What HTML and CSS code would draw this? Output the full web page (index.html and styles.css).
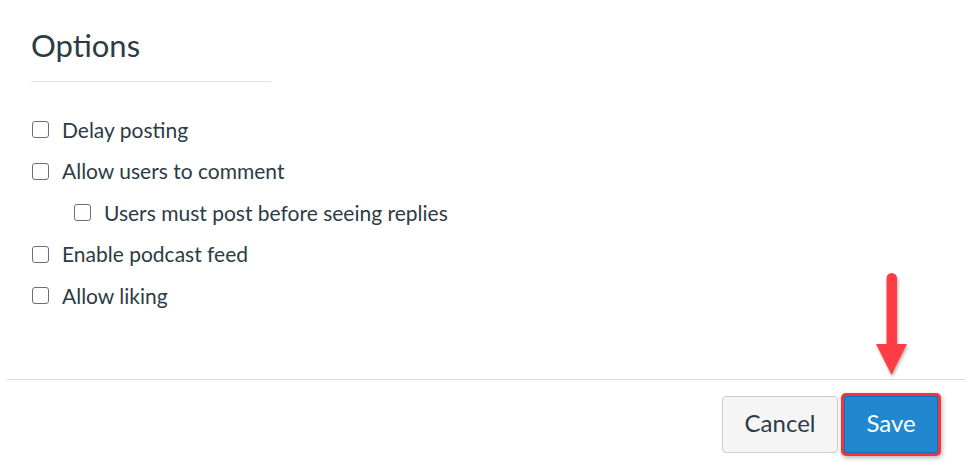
FILE: index.html
```html
<!DOCTYPE html>
<html lang="en">
<head>
<meta charset="utf-8">
<title>Options</title>
<link rel="stylesheet" href="styles.css">
</head>
<body>
<div class="page">
  <section class="options">
    <h2 class="options-title">Options</h2>
    <ul class="option-list">
      <li class="option"><span class="box"></span><span class="label">Delay posting</span></li>
      <li class="option"><span class="box"></span><span class="label">Allow users to comment</span></li>
      <li class="option option-nested"><span class="box"></span><span class="label">Users must post before seeing replies</span></li>
      <li class="option"><span class="box"></span><span class="label">Enable podcast feed</span></li>
      <li class="option"><span class="box"></span><span class="label">Allow liking</span></li>
    </ul>
  </section>
  <footer class="actions">
    <button class="btn btn-cancel" type="button">Cancel</button>
    <button class="btn btn-save" type="button">Save</button>
  </footer>
  <svg class="arrow" width="36" height="108" viewBox="0 0 36 108" aria-hidden="true">
    <defs>
      <filter id="sh" x="-50%" y="-20%" width="200%" height="140%">
        <feDropShadow dx="1" dy="2" stdDeviation="1.5" flood-color="#000" flood-opacity="0.3"/>
      </filter>
    </defs>
    <g filter="url(#sh)" fill="#ff3d44">
      <rect x="12.5" y="1" width="10.5" height="76" rx="5.25"/>
      <polygon points="2,72 33,72 17.5,103"/>
    </g>
  </svg>
</div>
</body>
</html>
```

FILE: styles.css
```css
html, body {
  margin: 0;
  padding: 0;
  background: #ffffff;
}

body {
  font-family: Lato, "Open Sans", sans-serif;
  color: #2d3b45;
}

.page {
  position: relative;
  width: 965px;
  height: 466px;
  overflow: hidden;
}

.options {
  padding: 26px 0 0 31px;
}

.options-title {
  margin: 0;
  width: 240px;
  font-size: 31px;
  font-weight: 400;
  line-height: 38px;
  padding-bottom: 16.5px;
  border-bottom: 1px solid #e3e3e3;
}

.option-list {
  list-style: none;
  margin: 36px 0 0 1px;
  padding: 0;
  display: flex;
  flex-direction: column;
  gap: 17.5px;
}

.option {
  display: flex;
  align-items: center;
  height: 24px;
  font-size: 21px;
  line-height: 24px;
}

.option-nested {
  padding-left: 42px;
}

.box {
  box-sizing: border-box;
  width: 17px;
  height: 17px;
  border: 1.5px solid #6b6f73;
  border-radius: 3px;
  margin-right: 13px;
  flex: none;
  background: #fff;
}

.actions {
  margin: 71px 0 0 7px;
  border-top: 1px solid #dcdcdc;
  padding: 16px 27px 0 0;
  display: flex;
  justify-content: flex-end;
  gap: 6px;
}

.btn {
  box-sizing: border-box;
  height: 57px;
  padding: 0 0 3px 0;
  font-family: Lato, "Open Sans", sans-serif;
  font-size: 24px;
  border-radius: 4px;
  cursor: pointer;
}

.btn-cancel {
  width: 116px;
  background: #f5f5f5;
  border: 1px solid #c7cdd1;
  color: #2d3b45;
}

.btn-save {
  width: 94px;
  background: #2187cf;
  border: 1px solid #0f70b3;
  color: #ffffff;
  border-radius: 2px;
  box-shadow: 0 0 0 3px #f5353e, 1px 2px 5px 3px rgba(0, 0, 0, 0.3);
}

.arrow {
  position: absolute;
  left: 874px;
  top: 272px;
}
```
